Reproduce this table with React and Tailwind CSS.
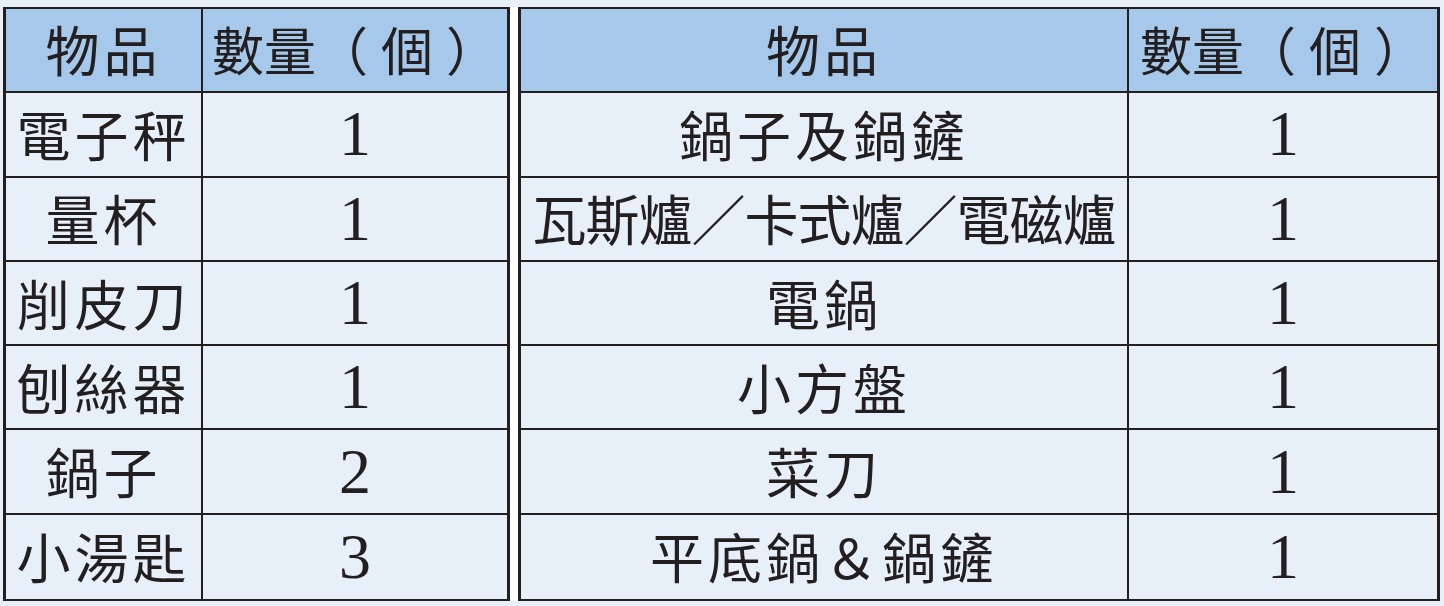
import React from 'react';

const left = [
  ['電子秤', '1'],
  ['量杯', '1'],
  ['削皮刀', '1'],
  ['刨絲器', '1'],
  ['鍋子', '2'],
  ['小湯匙', '3'],
];

const right = [
  ['鍋子及鍋鏟', '1'],
  ['瓦斯爐／卡式爐／電磁爐', '1'],
  ['電鍋', '1'],
  ['小方盤', '1'],
  ['菜刀', '1'],
  ['平底鍋＆鍋鏟', '1'],
];

const cjk = { fontFamily: '"Liberation Serif", "Noto Sans CJK TC", serif' };

const Table = ({ rows, cols }) => (
  <div className="h-[594px] border-y-2 border-x-[3px] border-[#231f20]">
    <div className={`grid ${cols} grid-rows-7 h-full`}>
      <div className="flex items-center justify-center pt-[8px] bg-[#a6c8ea] border-r-2 border-b-2 border-[#231f20] text-[54px] tracking-[4px] text-[#231f20]" style={cjk}>
        物品
      </div>
      <div className="flex items-center justify-center pt-[8px] bg-[#a6c8ea] border-b-2 border-[#231f20] text-[52px] text-[#231f20] whitespace-pre" style={cjk}>
        {'數量（ 個 ）'}
      </div>
      {rows.map(([item, qty], i) => {
        const last = i === rows.length - 1;
        return (
          <React.Fragment key={item}>
            <div
              className={`flex items-center justify-center pt-[10px] bg-[#e7eff8] border-r-2 border-[#231f20] text-[54px] text-[#231f20] whitespace-nowrap ${last ? '' : 'border-b-2'} ${item.length > 8 ? 'tracking-[-1px]' : 'tracking-[4px]'}`}
              style={cjk}
            >
              {item}
            </div>
            <div
              className={`flex items-center justify-center bg-[#e7eff8] border-[#231f20] text-[64px] text-[#231f20] ${last ? '' : 'border-b-2'}`}
              style={{ fontFamily: '"Liberation Serif", serif' }}
            >
              {qty}
            </div>
          </React.Fragment>
        );
      })}
    </div>
  </div>
);

export default function App() {
  return (
    <div className="w-[1444px] h-[606px] bg-[#e7eff8] pl-[3px] pt-[7px] flex items-start">
      <div className="w-[507px]">
        <Table rows={left} cols="grid-cols-[197px_1fr]" />
      </div>
      <div className="w-[8px] h-[594px] bg-white" />
      <div className="w-[922px]">
        <Table rows={right} cols="grid-cols-[608px_1fr]" />
      </div>
    </div>
  );
}
